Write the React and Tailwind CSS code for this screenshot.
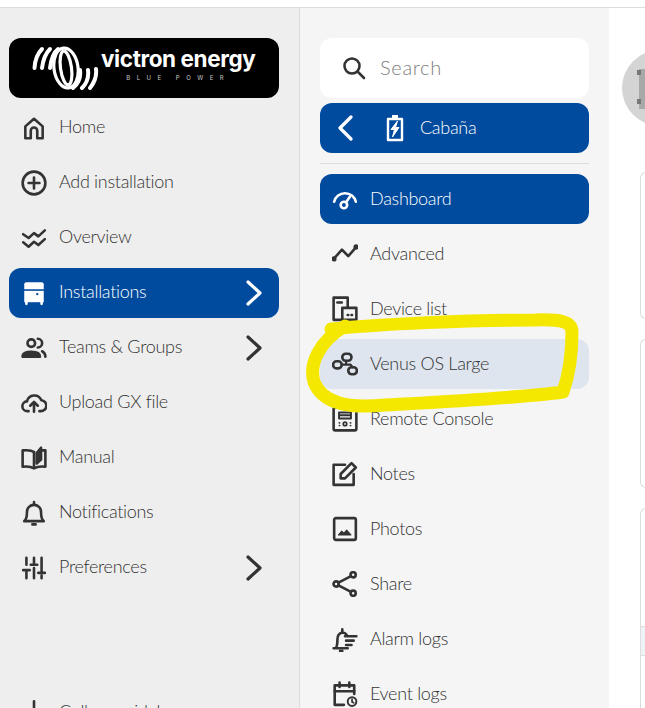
// App.jsx - Victron VRM sidebar
import React from 'react';

const Icon = ({ children, className = "", size = 26, fill = "none" }) => (
  <svg width={size} height={size} viewBox="0 0 24 24" fill={fill} stroke="currentColor" strokeWidth="2.4" strokeLinecap="round" strokeLinejoin="round" className={`shrink-0 ${className}`}>
    {children}
  </svg>
);

const Chevron = ({ left = false }) => (
  <svg width="16" height="26" viewBox="0 0 16 26" fill="none" stroke="currentColor" strokeWidth="3.2" strokeLinecap="round" strokeLinejoin="round" className="shrink-0">
    <path d={left ? "M14 2 3 13l11 11" : "M2 2l12 11L2 24"} />
  </svg>
);

const mainNav = [
  { label: 'Home', icon: <path d="M4 21.500V10.500L12 3.500l8 7v11h-5v-7a3 3 0 0 0-6 0v7z" /> },
  { label: 'Add installation', icon: <><circle cx="12" cy="12" r="10.500" /><path d="M12 7v10M7 12h10" /></> },
  { label: 'Overview', icon: <><path d="M2 8.500l5 3.500 5-4.500 4 3 6-5.500" /><path d="M2 16l5 4 5-4.500 4 3 6-5.500" /></> },
  { label: 'Installations', active: true, chevron: true, icon: (
    <>
      <path d="M5 2h14a2 2 0 0 1 2 2v4.500H3V4a2 2 0 0 1 2-2z" fill="currentColor" stroke="none" />
      <path d="M3 10h18v10.500H3z" fill="currentColor" stroke="none" />
      <path d="M5 20v2M19 20v2" />
      <circle cx="15" cy="13" r="1.100" fill="#004b9e" stroke="none" />
    </>
  ) },
  { label: 'Teams & Groups', chevron: true, icon: (
    <>
      <circle cx="9.500" cy="7.500" r="3.500" />
      <path d="M1.500 20c0-3 3-4.500 8-4.500s8 1.500 8 4.500z" fill="currentColor" />
      <path d="M15.500 3.500a4 4 0 0 1 0 8M19.500 15c2 1 3 2.500 3 5" />
    </>
  ) },
  { label: 'Upload GX file', icon: (
    <>
      <path d="M7 19.500H6a4.500 4.500 0 0 1-.5-9 7 7 0 0 1 13.300-1A5 5 0 0 1 18 19.500h-1" />
      <path d="M12 20v-8M8.500 14.500 12 11l3.500 3.500" />
    </>
  ) },
  { label: 'Manual', icon: (
    <>
      <path d="M12 6.500C10 5 6 4.500 1.500 5v15c4-.5 8 0 10.500 1.500 2.500-1.500 6.500-2 10.500-1.500V5H20" />
      <path d="M12 6.500V21" />
      <path d="M14.500 17V7.500l4-5V13.500z" fill="currentColor" />
    </>
  ) },
  { label: 'Notifications', icon: (
    <>
      <path d="M3 19.500h18c-2-1.500-2.500-4-2.500-8.500a6.500 6.500 0 0 0-13 0c0 4.500-.5 7-2.500 8.500z" />
      <path d="M12 2v2M10.500 22.500h3" />
    </>
  ) },
  { label: 'Preferences', chevron: true, icon: (
    <path d="M5 2.500V9M5 14v7.500M2 14h6M12 2.500v5M12 12v9.500M9 9h6M19 2.500V15M19 19v2.500M16 16.500h6" />
  ) },
];

const subNav = [
  { label: 'Dashboard', active: true, icon: (
    <>
      <path d="M2 14.500a10.300 10.300 0 0 1 20 0" />
      <circle cx="11" cy="17.500" r="3" />
      <path d="M13 15l3.500-5" />
    </>
  ) },
  { label: 'Advanced', icon: (
    <>
      <path d="M1.500 16.600 9.200 8 15 14 22.500 5.500" />
      <circle cx="1.800" cy="16.500" r="1.200" fill="currentColor" />
      <circle cx="22.200" cy="5.500" r="1.200" fill="currentColor" />
    </>
  ) },
  { label: 'Device list', icon: (
    <>
      <path d="M9.500 22H1.500V1.500h13v9" />
      <path d="M9.500 11h13v11h-13z" />
      <path d="M5 6h4" />
      <path d="M14.500 17.500h.5M18 17.500h.5" />
    </>
  ) },
  { label: 'Venus OS Large', icon: (
    <>
      <rect x="9.500" y="2.500" width="8.500" height="6.500" rx="3.200" />
      <rect x="1" y="9.500" width="8" height="6.500" rx="3.200" />
      <rect x="15" y="15" width="8" height="6.500" rx="3.200" />
      <path d="M13 9v3.500H9M13 12.500h4l2 2.500" strokeWidth="2" />
    </>
  ) },
  { label: 'Remote Console', icon: (
    <>
      <rect x="1.500" y="1.500" width="21" height="21" rx="1.500" />
      <path d="M6.500 6h11v5.500h-11zM6.500 8.500h11" strokeWidth="1.800" />
      <circle cx="12" cy="16.500" r="1.600" strokeWidth="1.600" />
      <path d="M6.800 15.500h.2M6.800 18h.2M17 15.500h.2M17 18h.2" strokeWidth="1.600" />
    </>
  ) },
  { label: 'Notes', icon: (
    <>
      <path d="M12 3.500H1.500v18.500h18.500V12" />
      <path d="M8 16v-4L18 2l4 4-10 10z" />
    </>
  ) },
  { label: 'Photos', icon: (
    <>
      <rect x="2" y="2" width="20" height="20" rx="1.500" />
      <path d="M6 17.500l3-3.500 2 2 2.500-3 4 4.500z" fill="currentColor" strokeWidth="1" />
    </>
  ) },
  { label: 'Share', icon: (
    <>
      <circle cx="3.800" cy="12" r="2.400" />
      <circle cx="19.500" cy="3.500" r="2.400" />
      <circle cx="19.500" cy="20.500" r="2.400" />
      <path d="M6 10.800 17.500 4.700M6 13.200l11.500 6.100" />
    </>
  ) },
  { label: 'Alarm logs', icon: (
    <>
      <path d="M1.500 20.500h13M3.500 20.500c1.500-2 1.500-5 1.500-8 0-3.500 2-6 4.500-6.500 1.500 0 3 .5 4 2" />
      <path d="M9.500 3v2M7.500 23h2" />
      <path d="M12 9.500h10.500M13 13.500h7M13 17.500h5" />
    </>
  ) },
  { label: 'Event logs', icon: (
    <>
      <path d="M11 22H2.500V4h18v8" />
      <path d="M2.500 9.500h18M7 1.500v4M16 1.500v4" />
      <circle cx="18.500" cy="19" r="4" strokeWidth="1.800" />
      <path d="M18.500 17v2.300l1.500.8" strokeWidth="1.600" />
    </>
  ) },
];

const NavRow = ({ item, textClass = "pb-[3px]", highlight = "" }) => (
  <div className={`flex h-[50px] shrink-0 items-center rounded-xl pr-[17px] ${item.active ? 'bg-[#004b9e] text-white' : `text-[#333333] ${highlight}`}`}>
    <span className="ml-[12px] flex items-center gap-[12px]">
      <Icon>{item.icon}</Icon>
      <span className={`text-[18px] font-light tracking-[-0.3px] ${textClass}`}>{item.label}</span>
    </span>
    {item.chevron && <span className="ml-auto"><Chevron /></span>}
  </div>
);

const Logo = () => (
  <div className="flex h-[60px] shrink-0 items-center rounded-xl bg-black pl-[23px] text-white">
    <svg width="68" height="44" viewBox="0 0 68 44" fill="none" stroke="currentColor" strokeLinecap="round" className="shrink-0">
      <g strokeWidth="4">
        <path d="M2.500 22C3 14 6 7 10 3" />
        <path d="M10 22C11 14 14 7 18 3" />
        <path d="M18 22C19 14 22 6 26 3" />
        <path d="M48 24c1 8-2 14-7 18" />
        <path d="M56 24c1 8-2 14-6 18" />
        <path d="M64 23c1 8-2 14-6 19" />
      </g>
      <g strokeWidth="3.200">
        <ellipse cx="34" cy="22" rx="12" ry="20" transform="rotate(-8 34 22)" />
        <ellipse cx="34" cy="22" rx="5.500" ry="17" transform="rotate(-8 34 22)" />
      </g>
    </svg>
    <div className="ml-[1px] flex flex-col items-center pb-[7px] font-['Inter',sans-serif] leading-none">
      <span className="text-[22.500px] font-bold tracking-[-0.4px]">victron energy</span>
      <span className="mt-[4px] text-[6px] tracking-[6.500px] text-[#c9c9c9]">BLUE POWER</span>
    </div>
  </div>
);

const Card = ({ className = "", children }) => (
  <div className={`w-[40px] shrink-0 overflow-hidden rounded-l-md border border-r-0 border-[#dddddd] bg-white ${className}`}>
    {children}
  </div>
);

export default function App() {
  return (
    <div className="relative flex h-[708px] w-[645px] flex-col overflow-hidden bg-white font-['Lato',sans-serif]">
      <div className="h-[8px] shrink-0 border-b border-[#dcdcdc] bg-white" />
      <div className="flex min-h-0 flex-1">
        {/* Main sidebar */}
        <aside className="flex w-[300px] shrink-0 flex-col gap-[5px] border-r border-[#dcdcdc] bg-[#eeeeee] pl-[9px] pr-[20px] pt-[30px]">
          <Logo />
          {mainNav.map((item) => (
            <NavRow key={item.label} item={item} />
          ))}
          <div className="mt-[88px] flex h-[50px] shrink-0 items-center gap-[12px] pl-[12px] text-[#333333]">
            <Icon><path d="M5 22v-6M12 22V3M19 22v-3" /></Icon>
            <span className="text-[18px] font-light tracking-[-0.3px]">Collapse sidebar</span>
          </div>
        </aside>

        {/* Installation sidebar */}
        <aside className="flex w-[309px] shrink-0 flex-col bg-[#f5f5f5] px-[20px] pt-[30px]">
          <div className="flex h-[60px] shrink-0 items-center rounded-xl bg-white pl-[22px] text-[#333333]">
            <svg width="24" height="24" viewBox="0 0 24 24" fill="none" stroke="currentColor" strokeWidth="2.600" strokeLinecap="round" className="shrink-0">
              <circle cx="10" cy="10" r="7.500" />
              <path d="M15.500 15.500 22 22" />
            </svg>
            <span className="ml-[14px] pb-[3px] text-[20px] font-light tracking-[0.7px] text-[#7d7d7d]">Search</span>
          </div>
          <div className="mt-[5px] flex h-[50px] shrink-0 items-center rounded-xl bg-[#004b9e] pl-[17px] text-white">
            <Chevron left />
            <svg width="18" height="28" viewBox="0 0 18 28" fill="none" stroke="currentColor" strokeWidth="2.400" strokeLinejoin="round" className="ml-[33px] shrink-0">
              <path d="M2 5h14v21H2z" />
              <path d="M6 2.500h6" strokeWidth="3" />
              <path d="M11.500 7 5 15.500h3.500L6.500 23 13 13.500H9.500z" fill="currentColor" strokeWidth="1" />
            </svg>
            <span className="ml-[16px] pb-[2px] text-[18px] font-light tracking-[-0.3px]">Cabaña</span>
          </div>
          <div className="mb-[10px] mt-[10px] h-px shrink-0 bg-[#dddddd]" />
          <div className="flex flex-col gap-[5px]">
            {subNav.map((item) => (
              <NavRow key={item.label} item={item} textClass="pb-[1px]" highlight={item.label === 'Venus OS Large' ? 'bg-[#dee5ee]' : ''} />
            ))}
          </div>
        </aside>

        {/* Main content, cut off by the window */}
        <main className="relative flex min-w-0 flex-1 flex-col pl-[31px]">
          <div className="relative mt-[42px] h-[76px] w-[76px] shrink-0 -translate-x-[18px] rounded-full bg-[#d4d4d4]">
            <div className="ml-[17px] mt-[19px] h-[40px] w-[40px] bg-[#a8a8a8]" />
            <span className="absolute left-[15px] top-[20px] h-[5px] w-[4px] bg-[#777777]" />
            <span className="absolute left-[15px] top-[49px] h-[5px] w-[4px] bg-[#777777]" />
          </div>
          <Card className="mt-[46px] h-[147px]" />
          <Card className="mt-[20px] h-[149px]" />
          <Card className="mt-[20px] h-[240px]">
            <div className="mt-[117px] h-[30px] border-y border-[#dddddd] bg-[#eef3f8]" />
          </Card>
        </main>
      </div>

      {/* Yellow marker scribble */}
      <svg width="645" height="708" viewBox="0 0 645 708" fill="none" className="pointer-events-none absolute left-0 top-0">
        <path
          d="M331 329C380 324 470 320 535 320C562 319 572 322 572 332C572 350 570 372 563 392C520 398 440 402 385 405C345 409 322 402 314 382C309 365 318 342 345 326"
          stroke="#f5e800"
          strokeWidth="13"
          strokeLinecap="round"
          strokeLinejoin="round"
        />
      </svg>
    </div>
  );
}
